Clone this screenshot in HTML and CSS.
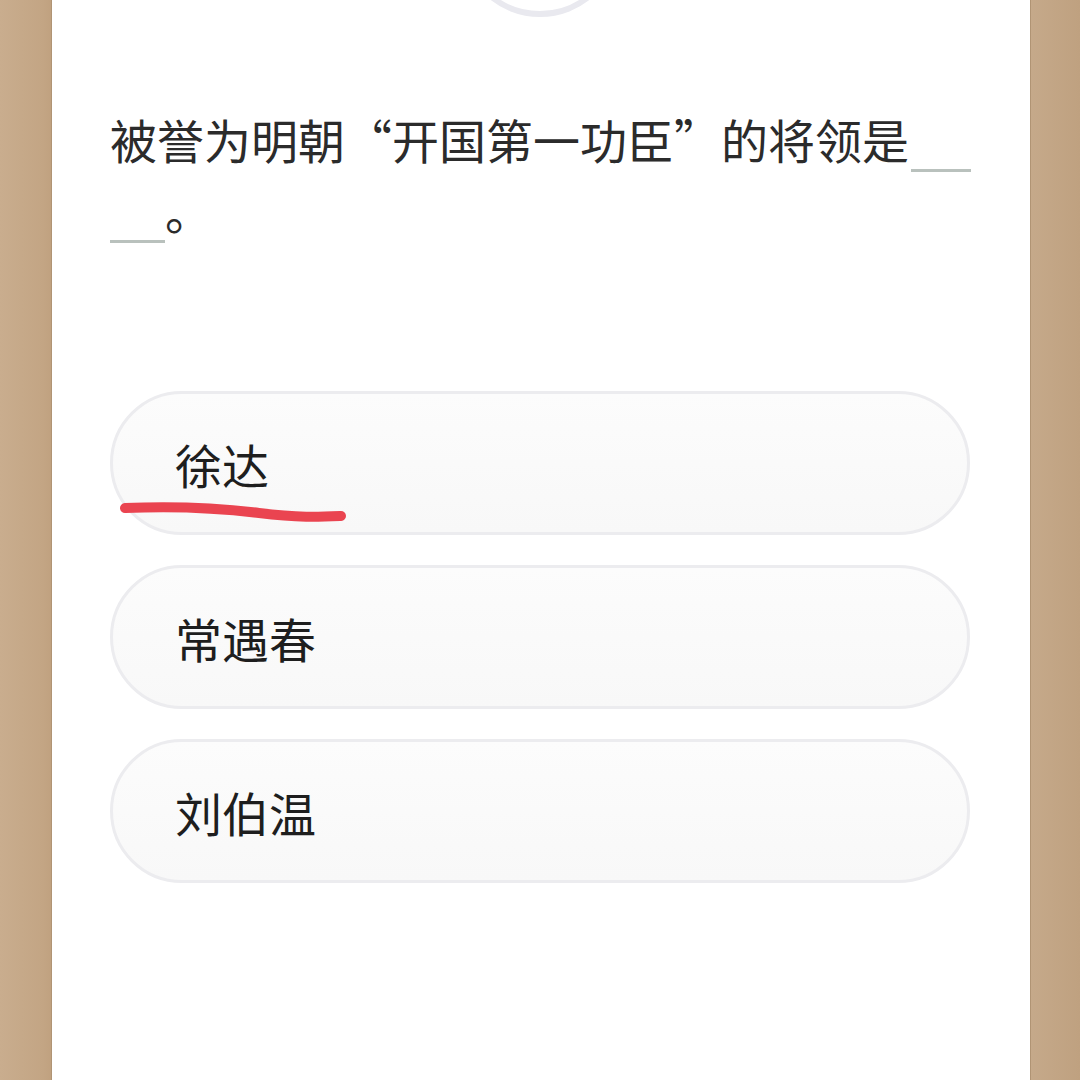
FILE: index.html
```html
<!DOCTYPE html>
<html lang="zh-CN">
<head>
    <meta charset="UTF-8">
    <title>答题</title>
    <link rel="stylesheet" href="styles.css">
</head>
<body>
<div class="card">
    <div class="timer-ring"></div>

    <div class="question">
        被誉为明朝“开国第一功臣”的将领是<span class="blank"></span><br><span class="blank short"></span>。
    </div>

    <div class="options">
        <div class="option marked">
            徐达
            <svg class="mark" width="240" height="30" viewBox="0 0 240 30">
                <path d="M6 8 C 50 6, 100 8, 140 13 S 200 17, 222 16" fill="none" stroke="#ea4450" stroke-width="10" stroke-linecap="round"/>
            </svg>
        </div>
        <div class="option">常遇春</div>
        <div class="option">刘伯温</div>
    </div>
</div>
</body>
</html>
```

FILE: styles.css
```css
body {
    margin: 0;
    background: linear-gradient(90deg, #c9ad8e 0%, #c3a584 4%, #bfa07e 5%, #c6aa8b 95%, #bfa180 100%);
    font-family: "Noto Sans CJK SC", "Noto Sans", sans-serif;
    height: 1080px;
    overflow: hidden;
}

.card {
    position: relative;
    background: #fff;
    margin: 0 50px 0 52px;
    height: 1080px;
    padding: 103px 40px 0 58px;
    box-sizing: border-box;
    box-shadow: -1px 0 0 #b09474, 1px 0 0 #b09474;
}

.timer-ring {
    position: absolute;
    left: 408px;
    top: -143px;
    width: 148px;
    height: 148px;
    border: 6px solid #e9e9ef;
    border-radius: 50%;
}

.question {
    font-size: 47px;
    line-height: 71px;
    color: #2b2b2b;
}

.blank {
    display: inline-block;
    width: 60px;
    height: 3px;
    background: #b9c1bd;
    vertical-align: -13px;
    margin-left: 2px;
}

.blank.short {
    width: 55px;
    margin-left: 0;
}

.options {
    margin-top: 146px;
    margin-right: 20px;
    display: flex;
    flex-direction: column;
    gap: 30px;
}

.option {
    position: relative;
    height: 144px;
    box-sizing: border-box;
    border: 3px solid #ececef;
    border-radius: 72px;
    background: linear-gradient(180deg, #fcfcfc, #f8f8f8);
    padding-left: 62px;
    display: flex;
    align-items: center;
    font-size: 47px;
    color: #1e1e1e;
}

.mark {
    position: absolute;
    left: 6px;
    top: 106px;
    overflow: visible;
}
```
